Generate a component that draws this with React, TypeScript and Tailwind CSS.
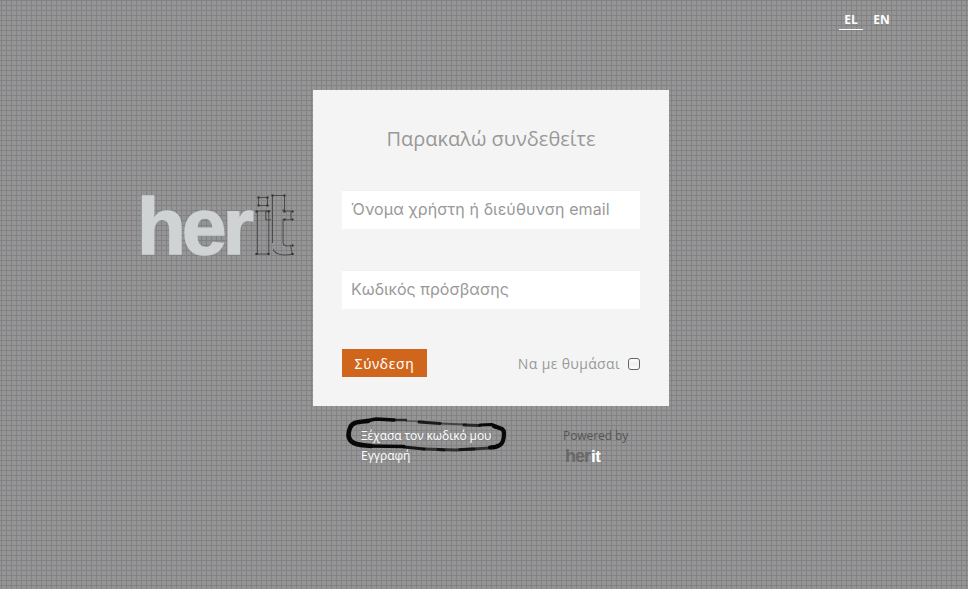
import React from "react";

const sans = "font-['Open_Sans','Noto_Sans',sans-serif]";
const field = "font-['Inter','Liberation_Sans',sans-serif]";

// Anchor handles on the outlined letters of the logo
const nodes = [
  [116.5, 3.5], [125.5, 3.5], [116.5, 11.5], [125.5, 11.5],
  [114.5, 17.5], [126.5, 17.5], [114.5, 60], [126.5, 60],
  [130.5, 1.5], [142.5, 1.5], [142.5, 17.5], [150.5, 17.5],
  [142.5, 25.5], [150.5, 25.5], [150.5, 51.5], [150.5, 60],
];

function Logo() {
  return (
    <svg width="156" height="66" viewBox="0 0 156 66" className="block overflow-visible font-bold">
      <clipPath id="outline">
        <rect x="112" y="15" width="17" height="50" />
        <rect x="131" y="15" width="24" height="65" />
      </clipPath>
      <text x="-5" y="60" fontSize="80" fill="#cfd3d4" stroke="#cfd3d4" strokeWidth="1.6" textLength="117" lengthAdjust="spacing" className="font-['Liberation_Sans',sans-serif]">her</text>
      <rect x="116.5" y="3.5" width="9" height="8" fill="none" stroke="#4b4b4d" />
      <text x="110.5 123" y="60" fontSize="78" fill="none" stroke="#4b4b4d" clipPath="url(#outline)" className="font-['Inter',sans-serif]">it</text>
      <line x1="130.5" y1="1.5" x2="130.5" y2="49" stroke="#4b4b4d" />
      <line x1="130.5" y1="1.5" x2="142.5" y2="1.5" stroke="#4b4b4d" />
      <line x1="142.5" y1="1.5" x2="142.5" y2="17" stroke="#4b4b4d" />
      {nodes.map(([x, y]) => (
        <rect key={`${x}-${y}`} x={x - 1} y={y - 1} width="2" height="2" fill="#2c2c2c" />
      ))}
    </svg>
  );
}

// Hand-drawn marker loop around the forgotten-password link
function Scribble() {
  return (
    <svg width="170" height="42" viewBox="0 0 170 42" fill="none" stroke="#080808" strokeLinecap="round" strokeLinejoin="round" className="pointer-events-none absolute left-[-17px] top-[-11px]">
      <path d="M24 6C14 7 8 7 6 13C4 18 4 23 7 26C12 31 20 30 27 31" strokeWidth="4.6" />
      <path d="M22 6L32 4L50 5" strokeWidth="3.6" />
      <path d="M26 31L60 31.5" strokeWidth="3.4" />
      <path d="M50 5L62 5" strokeWidth="2.4" opacity=".75" />
      <path d="M62 6L80 6.5" strokeWidth="1.5" opacity=".4" />
      <path d="M75 7L96 8.5" strokeWidth="3" opacity=".85" />
      <path d="M96 8.5L122 9.5" strokeWidth="2.2" opacity=".55" />
      <path d="M120 10L136 10.5" strokeWidth="3" opacity=".75" />
      <path d="M136 10L148 9.5L151 12" strokeWidth="3.2" />
      <path d="M150 11C155 13 160 13 160 18C160 24 159 28 156 30C153 32 149 32.5 146 32.5" strokeWidth="4.2" />
      <path d="M60 32L80 34" strokeWidth="3.2" opacity=".9" />
      <path d="M80 34L112 35L146 33" strokeWidth="3.2" opacity=".7" />
      <path d="M94 34.5L100 35M116 34.5L130 34" strokeWidth="3.2" opacity=".7" />
    </svg>
  );
}

export default function App() {
  return (
    <div className={`flex h-[589px] w-[968px] flex-col overflow-hidden bg-[#959595] bg-[linear-gradient(to_right,#828284_1px,transparent_1px),linear-gradient(to_bottom,#828284_1px,transparent_1px)] bg-[length:5px_5px] bg-[position:1px_0px] ${sans}`}>
      <nav className="flex h-[90px] items-start justify-end pr-[73px] pt-[10px] text-xs font-bold text-white">
        <a className="h-5 w-6 border-b border-white text-center leading-5">EL</a>
        <a className="ml-[5px] w-[27px] text-center leading-5">EN</a>
      </nav>
      <main className="flex">
        <div className="w-[313px] pl-[142px] pt-[104px]"><Logo /></div>
        <form className="flex h-[316px] w-[356px] flex-col bg-[#f4f4f4] px-[29px]">
          <h1 className="mt-[34px] h-[30px] text-center text-xl leading-[30px] text-[#999]">Παρακαλώ συνδεθείτε</h1>
          <input className={`mt-[37px] h-[38px] w-full bg-white px-[9px] pb-[2px] text-base tracking-[0.1px] shadow-[0_-1px_0_#f0f0f0] outline-none placeholder:text-[#999] placeholder:opacity-100 ${field}`} placeholder="Όνομα χρήστη ή διεύθυνση email" />
          <input type="password" className={`mt-[42px] h-[38px] w-full bg-white px-[9px] pb-[2px] text-base tracking-[0.04px] shadow-[0_-1px_0_#f0f0f0] outline-none placeholder:text-[#999] placeholder:opacity-100 ${field}`} placeholder="Κωδικός πρόσβασης" />
          <div className="mt-10 flex h-7 items-center justify-between">
            <button type="button" className="h-7 w-[85px] bg-[#d0661b] pt-px font-['Noto_Sans',sans-serif] text-sm tracking-[0.7px] text-white">Σύνδεση</button>
            <label className="flex items-center text-sm text-[#999]">
              <span className="mt-[2px] tracking-[0.35px]">Να με θυμάσαι</span>
              <span className="ml-2 mt-[2px] h-3 w-3 rounded-[3px] border border-[#666] bg-gradient-to-b from-white via-[#eee] to-white" />
            </label>
          </div>
        </form>
      </main>
      <footer className="flex pl-[361px] pt-5 text-xs leading-5">
        <div className="relative w-[202px] text-white">
          <Scribble />
          <a className="relative block tracking-[-0.08px]">Ξέχασα τον κωδικό μου</a>
          <a className="block">Εγγραφή</a>
        </div>
        <div className="text-[#555]">
          <p className="tracking-[-0.08px]">Powered by</p>
          <svg width="42" height="20" className="block font-['Liberation_Sans',sans-serif] font-bold">
            <text x="2" y="16" fontSize="18" fill="#686868" textLength="26">her</text>
            <text x="28" y="16" fontSize="17" fill="#fff" textLength="10">it</text>
          </svg>
        </div>
      </footer>
    </div>
  );
}
